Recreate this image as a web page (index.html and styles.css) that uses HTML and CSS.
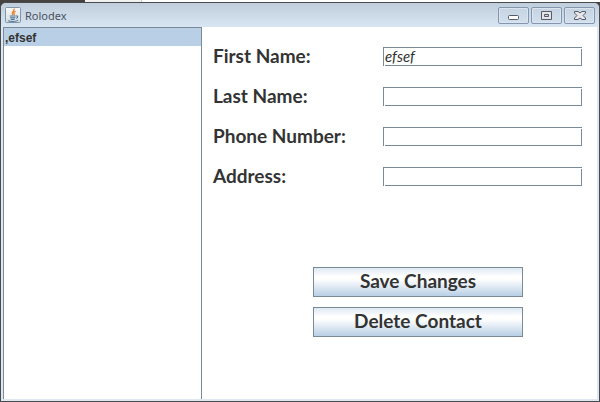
FILE: index.html
```html
<!DOCTYPE html>
<html lang="en">
<head>
<meta charset="utf-8">
<title>Rolodex</title>
<link rel="stylesheet" href="styles.css">
</head>
<body>
<div class="backdrop"><span class="backdrop-dark"></span><span class="backdrop-tab"></span></div>
<div class="window">
  <header class="titlebar">
    <svg class="app-icon" viewBox="0 0 16 16" aria-hidden="true">
      <defs><linearGradient id="tile" x1="0" y1="0" x2="0" y2="1"><stop offset="0" stop-color="#fafafa"/><stop offset="1" stop-color="#d3dbe2"/></linearGradient></defs>
      <rect x=".5" y=".5" width="15" height="15" rx="1" fill="url(#tile)" stroke="#8296aa"/>
      <path d="M9.2 1.6C10 4 5.6 4.7 7.7 8.2M10.6 4.3C8 5.1 8.3 6 9.2 6.8c.4.6 0 1-.5 1.5" fill="none" stroke="#e8842c" stroke-width="1.3"/>
      <path d="M4.7 9h6M5 10.8h5.4M5.7 12.4h4M11 9c2.3-.5 2.2 1.7.2 2.4M3 13.6c2 1.2 8 1.2 10.2-.2" fill="none" stroke="#4d7797" stroke-width="1.1"/>
    </svg>
    <h1 class="title">Rolodex</h1>
    <div class="controls">
      <button class="control" type="button" aria-label="Minimize"><svg viewBox="0 0 12 12"><rect x=".5" y="6.5" width="10" height="4" rx="1" fill="#fff" stroke="#565a6b"/></svg></button>
      <button class="control" type="button" aria-label="Maximize"><svg viewBox="0 0 12 12"><path d="M.5 2.5h10v8H.5zM3.500 5.500v2h4v-2z" fill="#e4e4e6" fill-rule="evenodd" stroke="#565a6b" stroke-linejoin="round"/></svg></button>
      <button class="control" type="button" aria-label="Close"><svg viewBox="0 0 12 12"><path d="M.5 2.500h3.500l2 1.500 2-1.500h3.500v1.500L9 6.500l2.500 2.500v1.500H8L6 9l-2 1.500H.5V9L3 6.500.5 4z" fill="#e8e8ea" stroke="#565a6b" stroke-linejoin="round"/></svg></button>
    </div>
  </header>
  <main class="content">
    <ul class="contacts"><li class="contact">,efsef</li></ul>
    <form class="editor">
      <div class="row"><label for="first">First Name:</label><input id="first" type="text" value="efsef"></div>
      <div class="row"><label for="last">Last Name:</label><input id="last" type="text"></div>
      <div class="row"><label for="phone">Phone Number:</label><input id="phone" type="text"></div>
      <div class="row"><label for="address">Address:</label><input id="address" type="text"></div>
      <div class="actions">
        <button class="action" type="button">Save Changes</button>
        <button class="action" type="button">Delete Contact</button>
      </div>
    </form>
  </main>
</div>
</body>
</html>
```
FILE: styles.css
```css
* { box-sizing: border-box; }
body {
  margin: 0;
  min-height: 100vh;
  display: flex;
  flex-direction: column;
  background: #45423f;
  color: #333;
  font-family: "Liberation Sans", sans-serif;
}
.backdrop { display: flex; height: 2px; background: #fff; }
.backdrop-dark { width: 85px; background: #45423f; }
.backdrop-tab { width: 57px; background: #f1f1f1; border-right: 1px solid #ccc; }
.window {
  flex: 1;
  display: flex;
  flex-direction: column;
  padding: 0 2px 2px;
  border: 1px solid #484a4d;
  border-radius: 6px 6px 0 0;
  background: #dfe7f2;
}
.titlebar {
  display: flex;
  align-items: center;
  height: 24px;
  margin: 0 -2px;
  padding: 0 4px;
  border-radius: 5px 5px 0 0;
  background: linear-gradient(#c0cedb, #d8e5f2);
}
.app-icon { width: 16px; height: 16px; }
.title {
  flex: 1;
  margin: 0 0 0 4px;
  font: 11px "Noto Sans", sans-serif;
  color: #4a5260;
}
.controls { display: flex; gap: 2px; }
.control {
  display: flex;
  align-items: center;
  justify-content: center;
  width: 31px;
  height: 17px;
  padding: 0;
  border: 1px solid #8595b0;
  border-radius: 2px;
  background: linear-gradient(#c6d4e1, #d2dfec);
  box-shadow: inset 0 0 0 1px #dae5ef;
}
.control svg { width: 12px; height: 12px; }
.content { flex: 1; display: grid; grid-template-columns: 199px 1fr; background: #fff; }
.contacts {
  margin: 0;
  padding: 0;
  list-style: none;
  border: 1px solid #7a8a99;
  border-bottom: 0;
}
.contact {
  height: 18px;
  padding-left: 1px;
  background: #b8cfe5;
  font-size: 12px;
  font-weight: bold;
  line-height: 20px;
}
.editor { padding: 20px 15px 0 11px; font-family: Lato, sans-serif; }
.row {
  display: grid;
  grid-template-columns: 170px 1fr;
  height: 20px;
  margin-bottom: 20px;
}
.row label { font-size: 19px; font-weight: bold; line-height: 18px; }
.row input {
  width: 100%;
  height: 19px;
  padding: 0 2px 2px;
  border: 0;
  border-radius: 0;
  outline: 0;
  color: #333;
  font: italic 15px Lato, sans-serif;
  background:
    linear-gradient(#7a8a99, #7a8a99) 0 0 / 100% 1px no-repeat,
    linear-gradient(#7a8a99, #7a8a99) 0 0 / 1px 100% no-repeat,
    linear-gradient(#7a8a99, #7a8a99) 100% 100% / calc(100% - 2px) 1px no-repeat,
    linear-gradient(#7a8a99, #7a8a99) 100% 100% / 1px calc(100% - 2px) no-repeat,
    #fff;
}
.actions {
  display: flex;
  flex-direction: column;
  gap: 10px;
  margin-top: 80px;
  padding: 0 59px 0 100px;
}
.action {
  height: 30px;
  padding: 0 0 3px;
  border: 1px solid #7a8a99;
  border-radius: 0;
  background: linear-gradient(#dde8f3, #fff 30%, #fff 40%, #b8cfe5);
  color: #333;
  font: bold 19px Lato, sans-serif;
}
```
